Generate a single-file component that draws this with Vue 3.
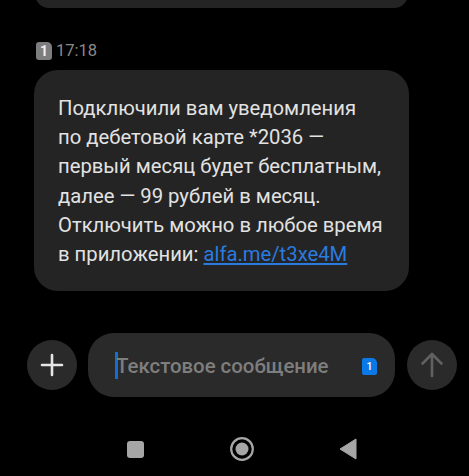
<script setup>
const lines = [
  'Подключили вам уведомления',
  'по дебетовой карте *2036 —',
  'первый месяц будет бесплатным,',
  'далее — 99 рублей в месяц.',
  'Отключить можно в любое время',
];
</script>

<template>
  <main class="screen">
    <div class="prev-bubble"></div>
    <div class="meta">
      <span class="sim-tag">1</span>
      <span class="time">17:18</span>
    </div>
    <section class="bubble">
      <p v-for="line in lines" :key="line" class="line">{{ line }}</p>
      <p class="line">в приложении: <a class="link">alfa.me/t3xe4M</a></p>
    </section>
    <div class="composer">
      <button class="round">
        <svg width="24" height="24" viewBox="0 0 24 24"><path d="M12 2v20M2 12h20" stroke="#e6e6e6" stroke-width="2.6" stroke-linecap="round" fill="none"/></svg>
      </button>
      <div class="field">
        <span class="caret"></span>
        <span class="placeholder">Текстовое сообщение</span>
        <span class="sim-blue">1</span>
      </div>
      <button class="round">
        <svg width="24" height="26" viewBox="0 0 24 26"><path d="M12 24V2M2.5 11.500 12 2l9.500 9.500" stroke="#616161" stroke-width="2.6" stroke-linecap="round" stroke-linejoin="round" fill="none"/></svg>
      </button>
    </div>
    <nav class="nav">
      <span class="nav-square"></span>
      <svg width="26" height="26" viewBox="0 0 26 26"><circle cx="13" cy="13" r="10.8" stroke="#a6a6a6" stroke-width="2.2" fill="none"/><circle cx="13" cy="13" r="6.5" fill="#a6a6a6"/></svg>
      <svg width="18" height="22" viewBox="0 0 18 22"><path d="M17 1v20L1 11z" fill="#a6a6a6" stroke="#a6a6a6" stroke-width="1" stroke-linejoin="round"/></svg>
    </nav>
  </main>
</template>

<style scoped>
.screen {
  width: 469px;
  height: 476px;
  background: #000;
  overflow: hidden;
  display: flex;
  flex-direction: column;
  font-family: Roboto, "Liberation Sans", sans-serif;
}
.prev-bubble {
  width: 373px;
  height: 28px;
  margin: -20px 0 0 35px;
  flex: none;
  background: #242424;
  border-radius: 24px;
}
.meta {
  display: flex;
  align-items: center;
  gap: 4px;
  margin: 33px 0 0 36px;
  height: 19px;
}
.sim-tag {
  width: 16px;
  height: 18px;
  background: #7d7d7d;
  border-radius: 3px 5px 3px 3px;
  color: #f0f0f0;
  font-size: 14px;
  font-weight: 700;
  line-height: 18px;
  text-align: center;
}
.time {
  color: #8a8a8a;
  font-size: 16.5px;
}
.bubble {
  width: 375px;
  height: 221px;
  box-sizing: border-box;
  margin: 10px 0 0 34px;
  padding: 24px 0 0 24px;
  background: #242424;
  border-radius: 24px;
}
.line {
  margin: 0;
  height: 29.2px;
  line-height: 29.2px;
  font-size: 20.25px;
  color: #e2e2e2;
  white-space: nowrap;
}
.link {
  color: #2a7be0;
  text-decoration: underline;
}
.composer {
  display: flex;
  align-items: center;
  margin: 42px 0 0 27px;
}
.round {
  width: 50px;
  height: 50px;
  padding: 0;
  border: 0;
  border-radius: 50%;
  background: #2a2a2a;
  display: flex;
  align-items: center;
  justify-content: center;
  flex: none;
}
.field {
  width: 307px;
  height: 64px;
  margin: 0 12px 0 11px;
  padding-left: 27px;
  box-sizing: border-box;
  background: #2a2a2a;
  border-radius: 26px;
  display: flex;
  align-items: center;
  position: relative;
}
.caret {
  width: 3px;
  height: 27px;
  margin-right: -2px;
  background: #0f6fd6;
  flex: none;
}
.placeholder {
  color: #7e7e7e;
  font-size: 20.4px;
  font-weight: 500;
  white-space: nowrap;
  position: relative;
  top: 1px;
}
.sim-blue {
  position: absolute;
  left: 274px;
  top: 25px;
  width: 15px;
  height: 17px;
  background: #0a78e6;
  border-radius: 2px 5px 2px 2px;
  color: #fff;
  font-size: 10.5px;
  font-weight: 500;
  line-height: 17px;
  text-align: center;
}
.nav {
  display: flex;
  align-items: center;
  margin-top: 35px;
  padding-left: 127px;
  height: 34px;
}
.nav-square {
  width: 17px;
  height: 17px;
  background: #a6a6a6;
  border-radius: 3px;
  margin-right: 85px;
}
.nav svg:last-child {
  margin-left: 84px;
}
</style>
